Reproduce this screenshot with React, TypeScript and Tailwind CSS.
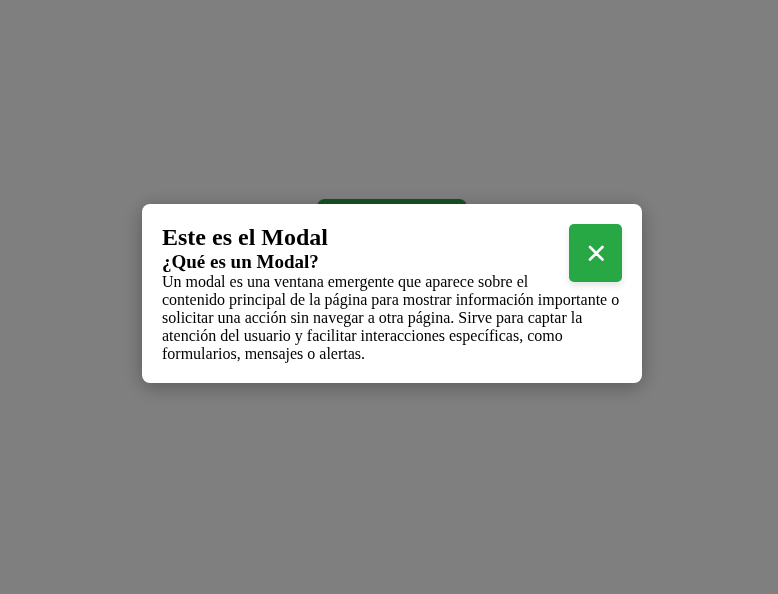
export default function App() {
  return (
    <div className="min-h-screen bg-white font-['Liberation_Serif','Times_New_Roman',serif] text-black">
      <main className="flex min-h-screen items-center justify-center pb-[138px] pl-1.5">
        <button
          type="button"
          aria-label="Abrir Modal"
          className="h-[58px] w-[150px] rounded-lg bg-[#28a745] shadow-[0_4px_6px_rgba(0,0,0,0.1)]"
        />
      </main>
      <div className="fixed inset-0 flex items-center justify-center bg-black/50 pb-2 pl-1.5">
        <div
          role="dialog"
          aria-modal="true"
          aria-labelledby="titulo"
          className="w-[500px] max-w-full rounded-lg bg-white p-5 shadow-[0_4px_20px_rgba(0,0,0,0.3)]"
        >
          <button
            type="button"
            aria-label="Cerrar"
            className="float-right flex h-[58px] w-[53px] items-center justify-center rounded-[5px] bg-[#28a745] text-white shadow-[0_4px_6px_rgba(0,0,0,0.1)]"
          >
            <svg viewBox="0 0 18 18" className="size-[18px]" fill="none" stroke="currentColor" strokeWidth="2.6" strokeLinecap="round" aria-hidden="true">
              <path d="M3 3 15.5 15.5M15.5 3 3 15.5" />
            </svg>
          </button>
          <h2 id="titulo" className="text-2xl leading-[27px] font-bold">Este es el Modal</h2>
          <h3 className="text-[19px] leading-[22px] font-bold">¿Qué es un Modal?</h3>
          <p className="text-base leading-[18px]">
            Un modal es una ventana emergente que aparece sobre el contenido principal de la página para mostrar información importante o solicitar una acción sin navegar a otra página. Sirve para captar la atención del usuario y facilitar interacciones específicas, como formularios, mensajes o alertas.
          </p>
        </div>
      </div>
    </div>
  );
}
